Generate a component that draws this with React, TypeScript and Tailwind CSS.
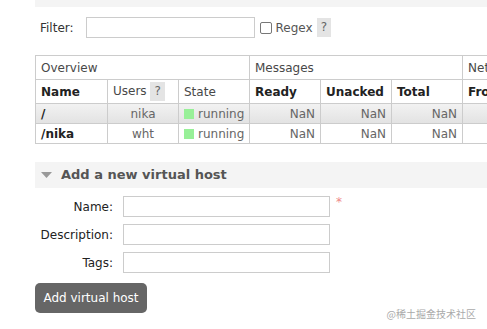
import React from 'react';

const font = { fontFamily: '"DejaVu Sans", Verdana, sans-serif' };

function Help() {
  return <span className="inline-block bg-[#e4e4e4] text-[#666] px-[4px] leading-[19px] text-[12px]">?</span>;
}

function Triangle() {
  return (
    <svg width="11" height="7" viewBox="0 0 11 7" className="mr-[9px]">
      <path d="M0 0 L11 0 L5.5 6 Z" fill="#999" />
    </svg>
  );
}

const rows = [
  { name: '/', users: 'nika', shaded: true },
  { name: '/nika', users: 'wht', shaded: false },
];

export default function App() {
  return (
    <div className="w-[487px] h-[329px] overflow-hidden bg-white text-[#484848] text-[12px] relative" style={font}>
      <div className="pl-[35px]">
        {/* cut-off section header */}
        <div className="-mt-[19px] h-[26px] bg-[#f4f4f4] flex items-center pl-[6px] font-bold text-[13px] text-[#555]">
          <Triangle />
          All virtual hosts
        </div>

        <div className="flex items-center h-[21px] mt-[10px] pl-[5px]">
          <span className="text-[#333] mr-[12px]">Filter:</span>
          <input className="w-[169px] h-[21px] border border-[#ccc] outline-none" />
          <span className="ml-[5px] w-[12px] h-[12px] border border-[#777] rounded-[2px] inline-block" />
          <span className="ml-[4px] mr-[4px] text-[#555]">Regex</span>
          <Help />
        </div>

        <table className="mt-[17px] border-collapse table-fixed w-[500px]">
          <colgroup>
            <col className="w-[72px]" />
            <col className="w-[71px]" />
            <col className="w-[71px]" />
            <col className="w-[71px]" />
            <col className="w-[71px]" />
            <col className="w-[71px]" />
            <col className="w-[73px]" />
          </colgroup>
          <thead>
            <tr className="h-[24px]">
              <th colSpan={3} className="border border-[#ccc] text-left font-normal px-[5px]">Overview</th>
              <th colSpan={3} className="border border-[#ccc] text-left font-normal px-[5px]">Messages</th>
              <th className="border border-[#ccc] text-left font-normal px-[5px] whitespace-nowrap">Network</th>
            </tr>
            <tr className="h-[24px]">
              <th className="border border-[#ccc] text-left font-bold px-[5px] text-[#222]">Name</th>
              <th className="border border-[#ccc] text-left font-normal px-[5px]">
                Users <Help />
              </th>
              <th className="border border-[#ccc] text-left font-normal px-[5px]">State</th>
              <th className="border border-[#ccc] text-left font-bold px-[5px] text-[#222]">Ready</th>
              <th className="border border-[#ccc] text-left font-bold px-[5px] text-[#222]">Unacked</th>
              <th className="border border-[#ccc] text-left font-bold px-[5px] text-[#222]">Total</th>
              <th className="border border-[#ccc] text-left font-bold px-[5px] text-[#222] whitespace-nowrap">From client</th>
            </tr>
          </thead>
          <tbody>
            {rows.map((r) => (
              <tr
                key={r.name}
                className={r.shaded ? 'h-[20px] bg-gradient-to-b from-[#f2f2f2] to-[#e2e2e2]' : 'h-[20px] bg-white'}
              >
                <td className="border border-[#ccc] px-[5px] font-bold text-[#222]">{r.name}</td>
                <td className="border border-[#ccc] px-[5px] text-center text-[#666]">{r.users}</td>
                <td className="border border-[#ccc] px-[5px] text-[#666] whitespace-nowrap">
                  <span className="inline-block w-[10px] h-[10px] bg-[#98f098] mr-[4px] align-[-1px]" />
                  running
                </td>
                <td className="border border-[#ccc] px-[5px] text-right text-[#666]">NaN</td>
                <td className="border border-[#ccc] px-[5px] text-right text-[#666]">NaN</td>
                <td className="border border-[#ccc] px-[5px] text-right text-[#666]">NaN</td>
                <td className="border border-[#ccc] px-[5px]"></td>
              </tr>
            ))}
          </tbody>
        </table>

        <div className="mt-[18px] h-[26px] bg-[#f4f4f4] flex items-center pl-[6px] font-bold text-[13px] text-[#555]">
          <Triangle />
          Add a new virtual host
        </div>

        <div className="mt-[8px] flex flex-col gap-[7px]">
          {['Name:', 'Description:', 'Tags:'].map((l, i) => (
            <div key={l} className="flex items-center h-[21px]">
              <span className="w-[78px] text-right text-[#222]">{l}</span>
              <input className="ml-[10px] w-[207px] h-[21px] border border-[#ccc] outline-none" />
              {i === 0 && <span className="ml-[6px] -mt-[10px] text-[#e88] text-[12px]">*</span>}
            </div>
          ))}
        </div>

        <button className="mt-[10px] h-[30px] w-[112px] bg-[#666] text-white rounded-[5px] text-[12px]" style={font}>
          Add virtual host
        </button>
      </div>

      <div
        className="absolute right-[11px] bottom-[8px] text-[10px] text-[#aaa]"
        style={{ fontFamily: '"Noto Sans CJK SC", sans-serif' }}
      >
        @稀土掘金技术社区
      </div>
    </div>
  );
}
